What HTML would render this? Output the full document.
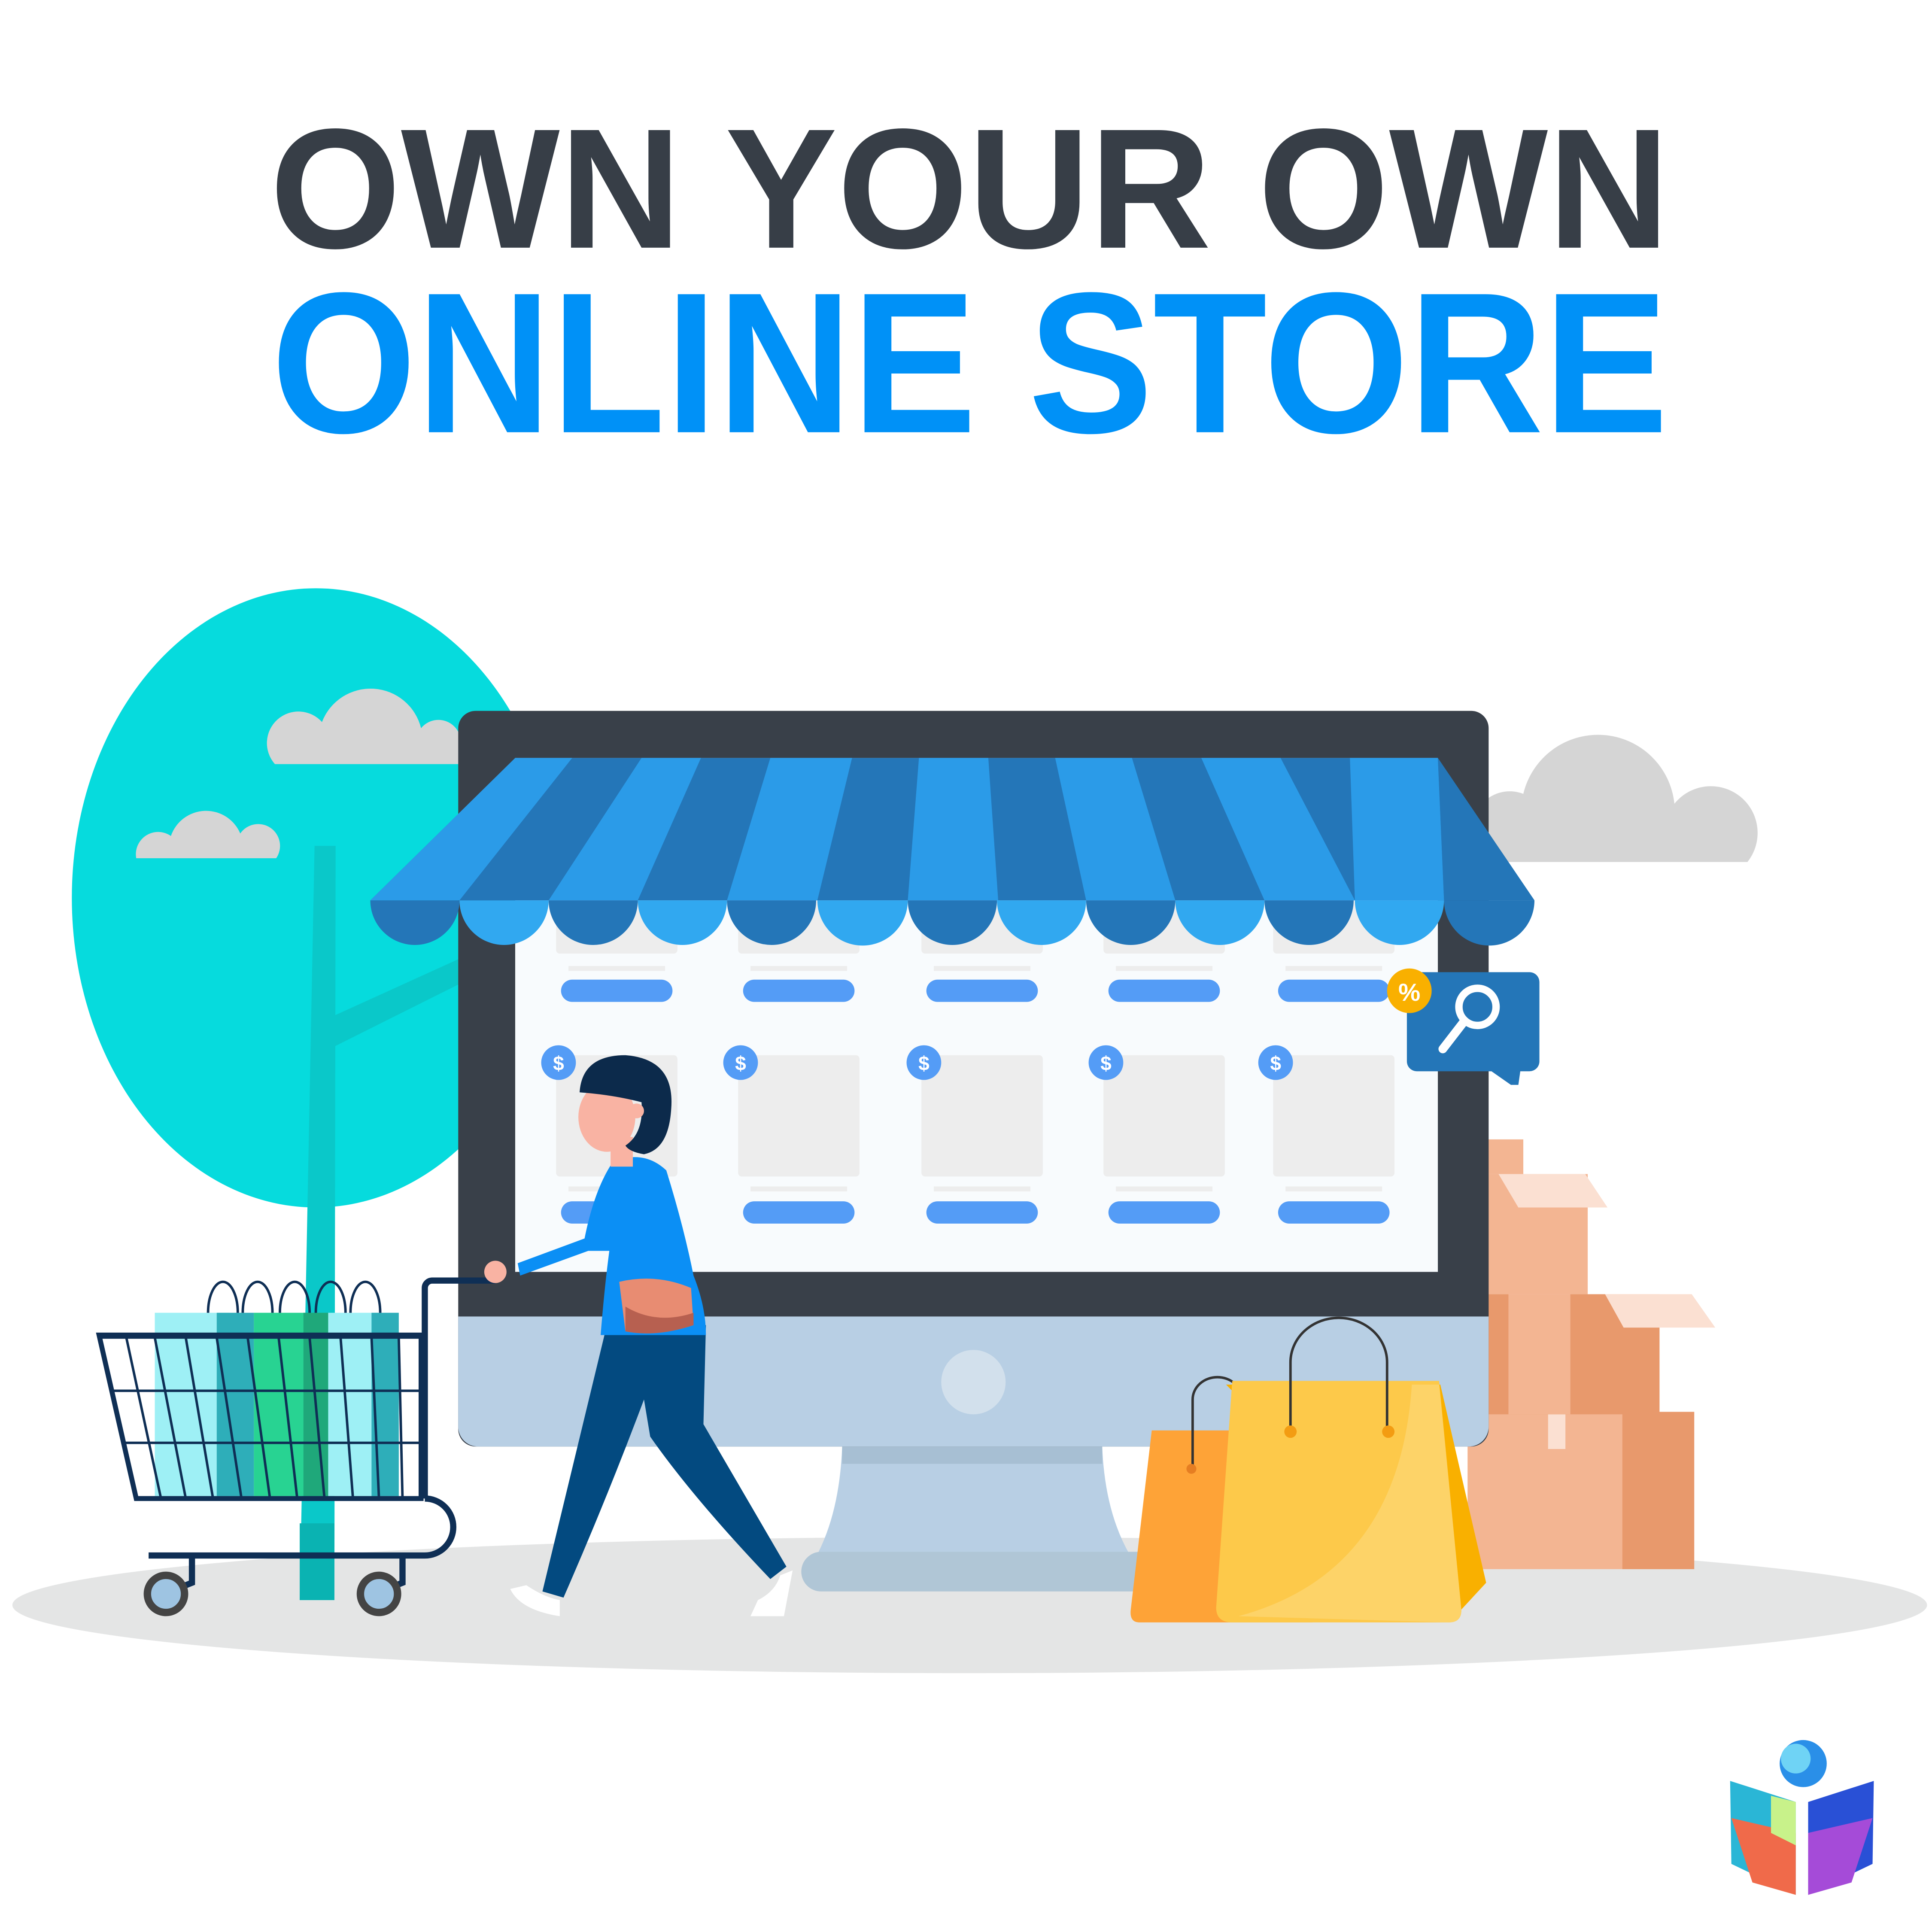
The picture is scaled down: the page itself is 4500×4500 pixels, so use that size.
<!DOCTYPE html>
<html><head><meta charset="utf-8"><style>
html,body{margin:0;padding:0;background:#fff;}
svg{display:block;}
</style></head><body>
<svg width="4500" height="4500" viewBox="0 0 1560 1560" xmlns="http://www.w3.org/2000/svg">
<rect width="1560" height="1560" fill="#fff"/>
<text x="218" y="200" font-family="Liberation Sans, sans-serif" font-weight="bold" font-size="138" fill="#373e47" textLength="1130" lengthAdjust="spacingAndGlyphs">OWN YOUR OWN</text>
<text x="219" y="349" font-family="Liberation Sans, sans-serif" font-weight="bold" font-size="162" fill="#0091f7" textLength="1128" lengthAdjust="spacingAndGlyphs">ONLINE STORE</text>

<ellipse cx="783" cy="1296" rx="773" ry="55" fill="#e4e5e5"/>

<ellipse cx="255" cy="725" rx="197" ry="250" fill="#06dbdd"/>
<polygon points="254,683 271,683 270,1292 242,1292" fill="#0ac8c9"/>
<polygon points="270,820 380,770 380,790 270,845" fill="#0ac8c9"/>
<polygon points="242,1230 270,1230 270,1292 242,1292" fill="#0ab3b2"/>

<path d="M222,617 a20,20 0 0 1 38,-34 a42,42 0 0 1 80,5 a18,18 0 0 1 32,10 v19z" fill="#d5d5d5"/>
<path d="M110,693 a18,18 0 0 1 28,-18 a30,30 0 0 1 56,-2 a15,15 0 0 1 29,20z" fill="#d5d5d5"/>
<path d="M1195,696 v-45 a30,30 0 0 1 35,-10 a62,62 0 0 1 122,8 a30,30 0 0 1 59,47z" fill="#d5d5d5"/>

<rect x="1185" y="1140" width="183" height="127" fill="#f3b592"/>
<rect x="1310" y="1140" width="58" height="127" fill="#e8996c"/>
<rect x="1250" y="1140" width="14" height="30" fill="#fbe0d2"/>
<rect x="1200" y="1045" width="140" height="97" fill="#e8996c"/>
<rect x="1218" y="1045" width="50" height="97" fill="#f3b592"/>
<polygon points="1296,1045 1366,1045 1385,1072 1311,1072" fill="#fbe0d2"/>
<rect x="1200" y="948" width="82" height="97" fill="#f3b592"/>
<rect x="1200" y="920" width="30" height="28" fill="#f3b592"/>
<polygon points="1210,948 1280,948 1298,975 1226,975" fill="#fbe0d2"/>

<path d="M680,1168 H890 Q892,1220 912,1255 H660 Q678,1220 680,1168z" fill="#b8cfe4"/>
<rect x="680" y="1168" width="210" height="14" fill="#a7bfd3"/>
<rect x="647" y="1253" width="290" height="32" rx="16" fill="#b0c6d6"/>
<rect x="370" y="574" width="832" height="594" rx="14" fill="#394049"/>
<path d="M370,1063 H1202 V1152 a16,16 0 0 1 -16,16 H386 a16,16 0 0 1 -16,-16z" fill="#b8cfe4"/>
<circle cx="786" cy="1116" r="26" fill="#d2e0ec"/>
<rect x="416" y="612" width="745" height="415" fill="#f8fbfd"/>

<g fill="#ededed">
<rect x="449" y="700" width="98" height="70" rx="3"/><rect x="596" y="700" width="98" height="70" rx="3"/><rect x="744" y="700" width="98" height="70" rx="3"/><rect x="891" y="700" width="98" height="70" rx="3"/><rect x="1028" y="700" width="98" height="70" rx="3"/>
<rect x="449" y="852" width="98" height="98" rx="3"/><rect x="596" y="852" width="98" height="98" rx="3"/><rect x="744" y="852" width="98" height="98" rx="3"/><rect x="891" y="852" width="98" height="98" rx="3"/><rect x="1028" y="852" width="98" height="98" rx="3"/>
<rect x="459" y="780" width="78" height="4"/><rect x="606" y="780" width="78" height="4"/><rect x="754" y="780" width="78" height="4"/><rect x="901" y="780" width="78" height="4"/><rect x="1038" y="780" width="78" height="4"/>
<rect x="459" y="958" width="78" height="4"/><rect x="606" y="958" width="78" height="4"/><rect x="754" y="958" width="78" height="4"/><rect x="901" y="958" width="78" height="4"/><rect x="1038" y="958" width="78" height="4"/>
</g>
<g fill="#549cf6">
<rect x="453" y="791" width="90" height="18" rx="9"/><rect x="600" y="791" width="90" height="18" rx="9"/><rect x="748" y="791" width="90" height="18" rx="9"/><rect x="895" y="791" width="90" height="18" rx="9"/><rect x="1032" y="791" width="90" height="18" rx="9"/>
<rect x="453" y="970" width="90" height="18" rx="9"/><rect x="600" y="970" width="90" height="18" rx="9"/><rect x="748" y="970" width="90" height="18" rx="9"/><rect x="895" y="970" width="90" height="18" rx="9"/><rect x="1032" y="970" width="90" height="18" rx="9"/>
<circle cx="451" cy="858" r="14"/><circle cx="598" cy="858" r="14"/><circle cx="746" cy="858" r="14"/><circle cx="893" cy="858" r="14"/><circle cx="1030" cy="858" r="14"/>
</g>
<g fill="#fff" font-family="Liberation Sans, sans-serif" font-weight="bold" font-size="16" text-anchor="middle">
<text x="451" y="864">$</text><text x="598" y="864">$</text><text x="746" y="864">$</text><text x="893" y="864">$</text><text x="1030" y="864">$</text>
</g>

<polygon points="416,612 1161,612 1239,727 299,727" fill="#2476b8"/>
<g fill="#2b9be8">
<polygon points="416,612 462,612 371,727 299,727"/>
<polygon points="518,612 566,612 515,727 443,727"/>
<polygon points="622,612 688,612 660,727 587,727"/>
<polygon points="742,612 798,612 806,727 733,727"/>
<polygon points="852,612 914,612 949,727 877,727"/>
<polygon points="970,612 1034,612 1094,727 1021,727"/>
<polygon points="1090,612 1161,612 1166,727 1094,727"/>
</g>
<polygon points="1161,612 1239,727 1166,727" fill="#2476b8"/>
<g>
<path d="M299,727 a36,36 0 0 0 72,0z" fill="#2476b8"/>
<path d="M371,727 a36,36 0 0 0 72,0z" fill="#31a8f0"/>
<path d="M443,727 a36,36 0 0 0 72,0z" fill="#2476b8"/>
<path d="M515,727 a36,36 0 0 0 72,0z" fill="#31a8f0"/>
<path d="M587,727 a36,36 0 0 0 72,0z" fill="#2476b8"/>
<path d="M660,727 a36,36 0 0 0 73,0z" fill="#31a8f0"/>
<path d="M733,727 a36,36 0 0 0 72,0z" fill="#2476b8"/>
<path d="M805,727 a36,36 0 0 0 72,0z" fill="#31a8f0"/>
<path d="M877,727 a36,36 0 0 0 72,0z" fill="#2476b8"/>
<path d="M949,727 a36,36 0 0 0 72,0z" fill="#31a8f0"/>
<path d="M1021,727 a36,36 0 0 0 72,0z" fill="#2476b8"/>
<path d="M1094,727 a36,36 0 0 0 72,0z" fill="#31a8f0"/>
<path d="M1166,727 a36,36 0 0 0 73,0z" fill="#2476b8"/>
</g>

<rect x="1136" y="785" width="107" height="80" rx="8" fill="#2476b8"/>
<polygon points="1200,862 1228,862 1226,876 1220,876" fill="#2476b8"/>
<circle cx="1193" cy="813" r="15" fill="none" stroke="#fff" stroke-width="6"/>
<line x1="1182" y1="825" x2="1165" y2="847" stroke="#fff" stroke-width="7" stroke-linecap="round"/>
<circle cx="1138" cy="800" r="18" fill="#f9b000"/>
<text x="1138" y="808" font-family="Liberation Sans, sans-serif" font-weight="bold" font-size="20" fill="#fff" text-anchor="middle">%</text>

<g>
<rect x="125" y="1060" width="60" height="148" fill="#9ef0f5"/>
<rect x="175" y="1060" width="30" height="148" fill="#2eaeb9"/>
<rect x="205" y="1060" width="60" height="148" fill="#28d392"/>
<rect x="245" y="1060" width="22" height="148" fill="#1fa87a"/>
<rect x="265" y="1060" width="40" height="148" fill="#9ef0f5"/>
<rect x="300" y="1060" width="22" height="148" fill="#2eaeb9"/>
<g fill="none" stroke="#0f2f55" stroke-width="2">
<path d="M168,1060 a12,25 0 0 1 24,0"/><path d="M196,1060 a12,25 0 0 1 24,0"/><path d="M226,1060 a12,25 0 0 1 24,0"/><path d="M255,1060 a12,25 0 0 1 24,0"/><path d="M283,1060 a12,25 0 0 1 24,0"/>
</g>
<g stroke="#0f2f55" stroke-width="2">
<line x1="82" y1="1080" x2="340" y2="1080"/><line x1="90" y1="1123" x2="340" y2="1123"/><line x1="98" y1="1165" x2="340" y2="1165"/>
<line x1="102" y1="1080" x2="130" y2="1210"/><line x1="125" y1="1080" x2="150" y2="1210"/><line x1="150" y1="1080" x2="172" y2="1210"/><line x1="175" y1="1080" x2="195" y2="1210"/><line x1="200" y1="1080" x2="218" y2="1210"/><line x1="225" y1="1080" x2="240" y2="1210"/><line x1="250" y1="1080" x2="262" y2="1210"/><line x1="275" y1="1080" x2="285" y2="1210"/><line x1="300" y1="1080" x2="306" y2="1210"/><line x1="322" y1="1080" x2="325" y2="1210"/>
</g>
<path d="M80,1078 H340 V1210 H110z" fill="none" stroke="#0f2f55" stroke-width="4"/>
<path d="M343,1210 a18,18 0 0 1 0,46 H120" fill="none" stroke="#0f2f55" stroke-width="5"/>
<path d="M343,1210 V1040 a6,6 0 0 1 6,-6 H400" fill="none" stroke="#0f2f55" stroke-width="5"/>
<path d="M155,1256 v22 l-20,8 M325,1256 v22 l-20,8" fill="none" stroke="#0f2f55" stroke-width="5"/>
<circle cx="134" cy="1287" r="15" fill="#9ec4e2" stroke="#444" stroke-width="6"/>
<circle cx="306" cy="1287" r="15" fill="#9ec4e2" stroke="#444" stroke-width="6"/>
</g>

<g>
<path d="M490,1070 L438,1285 L455,1290 Q490,1210 520,1130 L525,1160 Q560,1210 622,1275 L635,1265 L568,1150 L570,1070z" fill="#034a80"/>
<path d="M412,1283 Q420,1300 452,1305 V1292 Q440,1290 425,1280z" fill="#fff"/>
<path d="M606,1305 H633 L640,1268 L630,1272 Q626,1285 612,1292z" fill="#fff"/>
<path d="M495,938 Q520,928 538,945 Q552,990 560,1030 Q570,1055 570,1078 H485 Q488,1040 492,1010 L475,1010 L420,1030 L418,1020 L472,1000 Q480,960 495,938z" fill="#0b8ff5"/>
<path d="M500,1035 Q530,1028 558,1040 L560,1070 Q530,1080 505,1075z" fill="#e88c72"/>
<path d="M505,1055 Q530,1070 560,1060 L560,1070 Q530,1080 505,1075z" fill="#b76050"/>
<circle cx="400" cy="1027" r="9" fill="#f9b3a3"/>
<rect x="493" y="918" width="18" height="24" fill="#f9b3a3"/>
<ellipse cx="490" cy="902" rx="23" ry="28" fill="#f9b3a3"/>
<path d="M468,882 Q470,852 505,852 Q545,855 542,895 Q540,928 520,932 Q508,930 505,925 Q520,915 518,890 Q495,884 468,882z" fill="#0c2a4b"/>
<circle cx="514" cy="897" r="6" fill="#f9b3a3"/>
</g>

<path d="M930,1155 H1060 L1060,1310 H920 Q912,1310 913,1300z" fill="#fea337"/>
<path d="M963,1185 V1130 a20,18 0 0 1 40,0" fill="none" stroke="#333" stroke-width="2"/>
<path d="M990,1118 H1163 L1200,1278 L1175,1305 Z" fill="#f9b000"/>
<path d="M995,1115 H1162 L1180,1300 Q1180,1310 1170,1310 H995 Q982,1310 982,1298z" fill="#fdc94a"/>
<path d="M1000,1305 Q1130,1270 1140,1118 H1162 L1180,1300 Q1180,1310 1170,1310z" fill="#fdd368"/>
<path d="M1042,1155 V1100 a38,35 0 0 1 78,0 V1155" fill="none" stroke="#333" stroke-width="2"/>
<circle cx="1042" cy="1156" r="5" fill="#f39c12"/><circle cx="1121" cy="1156" r="5" fill="#f39c12"/><circle cx="962" cy="1186" r="4" fill="#e67e22"/>

<circle cx="1456" cy="1424" r="19" fill="#2a8fe8"/>
<circle cx="1450" cy="1420" r="12" fill="#6fd3f5"/>
<polygon points="1397,1438 1450,1455 1450,1530 1398,1505" fill="#2ab6d6"/>
<polygon points="1398,1468 1450,1480 1450,1530 1415,1520" fill="#f06a4a"/>
<polygon points="1513,1438 1460,1455 1460,1530 1512,1505" fill="#2950d6"/>
<polygon points="1512,1468 1460,1480 1460,1530 1495,1520" fill="#a54bd8"/>
<polygon points="1430,1450 1450,1455 1450,1490 1430,1480" fill="#c8f28a"/>
</svg>
</body></html>
